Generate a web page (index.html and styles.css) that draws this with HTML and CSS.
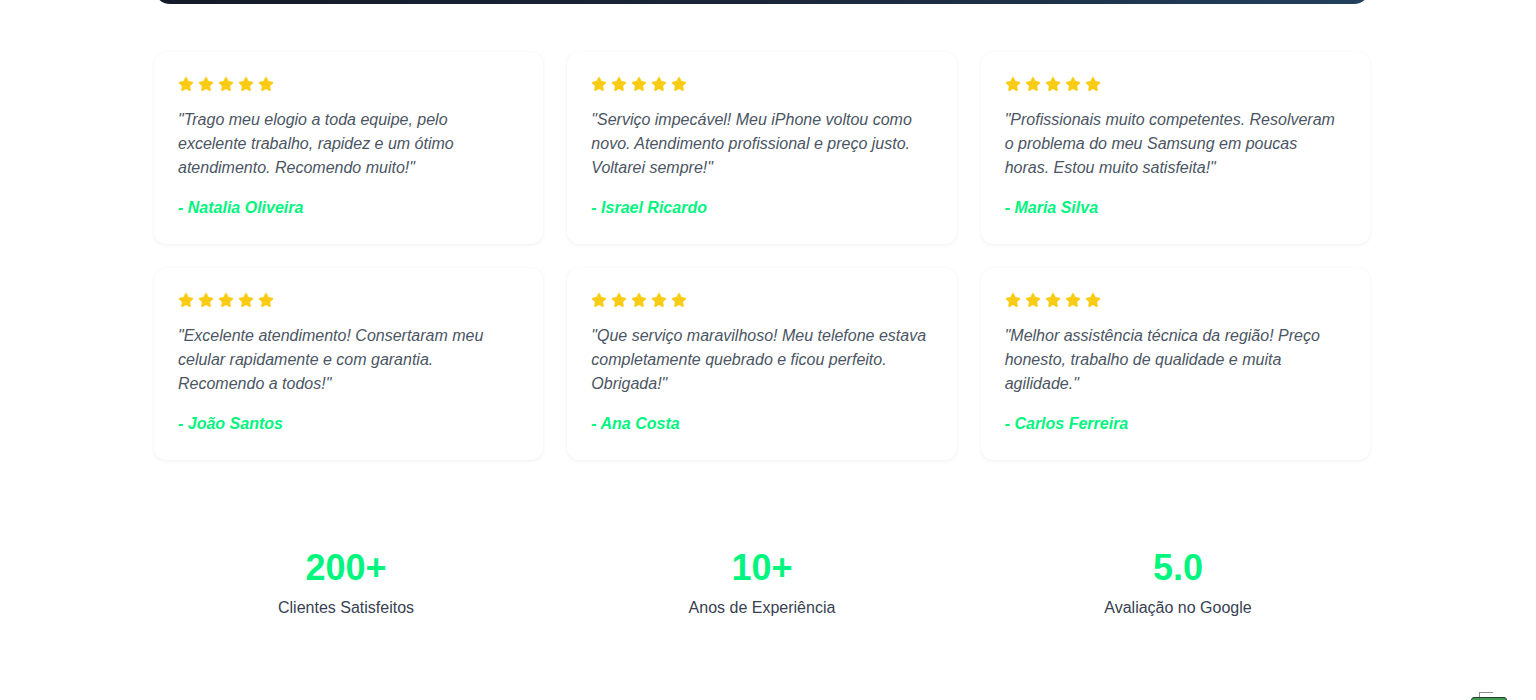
FILE: index.html
```html
<!DOCTYPE html>
<html lang="pt-BR">
<head>
<meta charset="utf-8">
<title>Depoimentos</title>
<link rel="stylesheet" href="styles.css">
</head>
<body>
<svg width="0" height="0" class="defs" aria-hidden="true">
  <defs>
    <symbol id="star" viewBox="0 0 576 512">
      <path d="M316.9 18C311.6 7 300.4 0 288.1 0s-23.4 7-28.8 18L195 150.3 51.4 171.5c-12 1.8-22 10.2-25.7 21.7s-.7 24.2 7.9 32.7L137.8 329 113.2 474.7c-2 12 3 24.2 12.9 31.3s23 8 33.8 2.3l128.3-68.5 128.3 68.5c10.8 5.7 23.9 4.9 33.8-2.3s14.9-19.3 12.9-31.3L438.5 329 542.7 225.9c8.6-8.5 11.7-21.2 7.9-32.7s-13.7-19.9-25.7-21.7L381.2 150.3 316.9 18z"/>
    </symbol>
  </defs>
</svg>
<div class="container">
  <div class="hero-end"></div>

  <section class="testimonials">
    <article class="card">
      <div class="stars"><svg><use href="#star"/></svg><svg><use href="#star"/></svg><svg><use href="#star"/></svg><svg><use href="#star"/></svg><svg><use href="#star"/></svg></div>
      <p class="quote">"Trago meu elogio a toda equipe, pelo excelente trabalho, rapidez e um ótimo atendimento. Recomendo muito!"</p>
      <p class="author">- Natalia Oliveira</p>
    </article>
    <article class="card">
      <div class="stars"><svg><use href="#star"/></svg><svg><use href="#star"/></svg><svg><use href="#star"/></svg><svg><use href="#star"/></svg><svg><use href="#star"/></svg></div>
      <p class="quote">"Serviço impecável! Meu iPhone voltou como novo. Atendimento profissional e preço justo. Voltarei sempre!"</p>
      <p class="author">- Israel Ricardo</p>
    </article>
    <article class="card">
      <div class="stars"><svg><use href="#star"/></svg><svg><use href="#star"/></svg><svg><use href="#star"/></svg><svg><use href="#star"/></svg><svg><use href="#star"/></svg></div>
      <p class="quote">"Profissionais muito competentes. Resolveram o problema do meu Samsung em poucas horas. Estou muito satisfeita!"</p>
      <p class="author">- Maria Silva</p>
    </article>
    <article class="card">
      <div class="stars"><svg><use href="#star"/></svg><svg><use href="#star"/></svg><svg><use href="#star"/></svg><svg><use href="#star"/></svg><svg><use href="#star"/></svg></div>
      <p class="quote">"Excelente atendimento! Consertaram meu celular rapidamente e com garantia. Recomendo a todos!"</p>
      <p class="author">- João Santos</p>
    </article>
    <article class="card">
      <div class="stars"><svg><use href="#star"/></svg><svg><use href="#star"/></svg><svg><use href="#star"/></svg><svg><use href="#star"/></svg><svg><use href="#star"/></svg></div>
      <p class="quote">"Que serviço maravilhoso! Meu telefone estava completamente quebrado e ficou perfeito. Obrigada!"</p>
      <p class="author">- Ana Costa</p>
    </article>
    <article class="card">
      <div class="stars"><svg><use href="#star"/></svg><svg><use href="#star"/></svg><svg><use href="#star"/></svg><svg><use href="#star"/></svg><svg><use href="#star"/></svg></div>
      <p class="quote">"Melhor assistência técnica da região! Preço honesto, trabalho de qualidade e muita agilidade."</p>
      <p class="author">- Carlos Ferreira</p>
    </article>
  </section>

  <section class="stats">
    <div class="stat">
      <div class="stat-number">200+</div>
      <div class="stat-label">Clientes Satisfeitos</div>
    </div>
    <div class="stat">
      <div class="stat-number">10+</div>
      <div class="stat-label">Anos de Experiência</div>
    </div>
    <div class="stat">
      <div class="stat-number">5.0</div>
      <div class="stat-label">Avaliação no Google</div>
    </div>
  </section>
</div>

<div class="float-widget"><span class="handle"></span></div>
</body>
</html>
```

FILE: styles.css
```css
* { box-sizing: border-box; }

html, body {
  margin: 0;
  padding: 0;
  background: #ffffff;
  font-family: "Liberation Sans", Arial, sans-serif;
  overflow: hidden;
}

.defs {
  position: absolute;
  width: 0;
  height: 0;
}

.container {
  width: 1216px;
  margin-left: 154px;
}

.hero-end {
  height: 40px;
  margin-top: -36px;
  background: linear-gradient(90deg, #141a29 0%, #1a2638 50%, #22405f 100%);
  border-radius: 0 0 16px 16px;
}

.testimonials {
  display: grid;
  grid-template-columns: repeat(3, 1fr);
  gap: 24px;
  padding-top: 48px;
}

.card {
  background: #ffffff;
  border-radius: 12px;
  padding: 24px;
  box-shadow: 0 1px 4px rgba(0, 0, 0, 0.06), 0 0 1px rgba(0, 0, 0, 0.04);
}

.stars {
  display: flex;
  align-items: center;
  gap: 4px;
  height: 16px;
  margin-bottom: 16px;
}

.stars svg {
  width: 16px;
  height: 14px;
  fill: #facc15;
}

.quote {
  margin: 0;
  font-style: italic;
  font-size: 16px;
  line-height: 24px;
  color: #4b5563;
}

.author {
  margin: 16px 0 0;
  font-style: italic;
  font-weight: bold;
  font-size: 16px;
  line-height: 24px;
  color: #00f57f;
}

.stats {
  display: grid;
  grid-template-columns: repeat(3, 1fr);
  gap: 32px;
  margin-top: 88px;
  text-align: center;
}

.stat-number {
  font-size: 36px;
  line-height: 40px;
  font-weight: bold;
  color: #00f57f;
}

.stat-label {
  margin-top: 8px;
  font-size: 16px;
  line-height: 24px;
  color: #374151;
}

.float-widget {
  position: fixed;
  left: 1471px;
  top: 697px;
  width: 36px;
  height: 20px;
  background: #3d9b52;
  border: 1px solid #22402a;
  border-radius: 3px;
}

.float-widget .handle {
  position: absolute;
  left: 7px;
  top: -6px;
  width: 14px;
  height: 5px;
  border-top: 1px solid #8a8f96;
  border-left: 1px solid #8a8f96;
}
```
